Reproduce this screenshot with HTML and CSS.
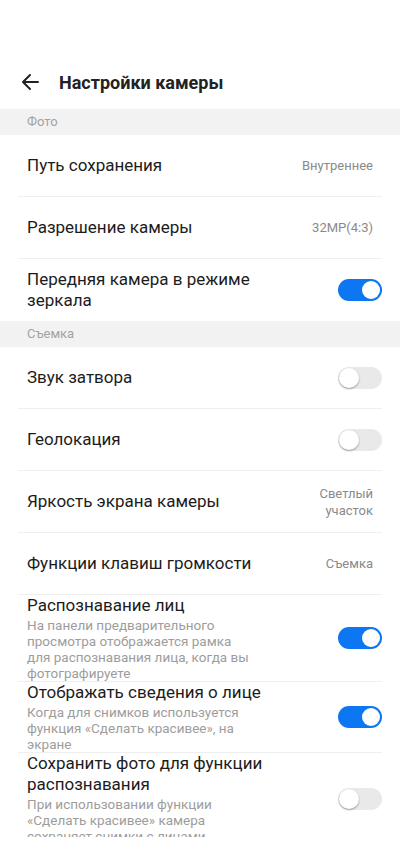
FILE: index.html
```html
<!DOCTYPE html>
<html lang="ru">
<head>
    <meta charset="UTF-8">
    <meta name="viewport" content="width=device-width, initial-scale=1.0">
    <title>Настройки камеры</title>
    <link rel="stylesheet" href="styles.css">
</head>
<body>
    <header class="top-bar">
        <button class="back" aria-label="Назад">
            <svg width="20" height="20" viewBox="0 0 20 20">
                <path d="M18 10H3.5M10 3L3 10l7 7" fill="none" stroke="#222" stroke-width="2" stroke-linecap="round" stroke-linejoin="round"/>
            </svg>
        </button>
        <h1>Настройки камеры</h1>
    </header>

    <main class="settings">
        <div class="group-label">Фото</div>
        <div class="row">
            <div class="text"><div class="name">Путь сохранения</div></div>
            <div class="value">Внутреннее</div>
        </div>
        <div class="row">
            <div class="text"><div class="name">Разрешение камеры</div></div>
            <div class="value">32MP(4:3)</div>
        </div>
        <div class="row last">
            <div class="text"><div class="name">Передняя камера в режиме зеркала</div></div>
            <span class="switch on"></span>
        </div>

        <div class="group-label">Съемка</div>
        <div class="row">
            <div class="text"><div class="name">Звук затвора</div></div>
            <span class="switch"></span>
        </div>
        <div class="row">
            <div class="text"><div class="name">Геолокация</div></div>
            <span class="switch"></span>
        </div>
        <div class="row">
            <div class="text"><div class="name">Яркость экрана камеры</div></div>
            <div class="value">Светлый<br>участок</div>
        </div>
        <div class="row">
            <div class="text"><div class="name">Функции клавиш громкости</div></div>
            <div class="value">Съемка</div>
        </div>
        <div class="row tall">
            <div class="text">
                <div class="name">Распознавание лиц</div>
                <div class="desc">На панели предварительного просмотра отображается рамка для распознавания лица, когда вы фотографируете</div>
            </div>
            <span class="switch on"></span>
        </div>
        <div class="row tall">
            <div class="text">
                <div class="name">Отображать сведения о лице</div>
                <div class="desc">Когда для снимков используется функция «Сделать красивее», на экране</div>
            </div>
            <span class="switch on"></span>
        </div>
        <div class="row tall">
            <div class="text">
                <div class="name">Сохранить фото для функции распознавания</div>
                <div class="desc">При использовании функции «Сделать красивее» камера сохраняет снимки с лицами</div>
            </div>
            <span class="switch"></span>
        </div>
    </main>
</body>
</html>
```

FILE: styles.css
```css
body {
  margin: 0;
  width: 400px;
  background: #fff;
  font-family: Roboto, "Noto Sans", Arial, sans-serif;
  color: #1c1c1c;
}
.top-bar {
  display: flex;
  align-items: center;
  height: 56px;
  padding-top: 54px;
  margin-bottom: -1px;
}
.back {
  background: none;
  border: 0;
  padding: 0;
  margin-left: 20px;
  width: 20px;
  height: 20px;
  display: flex;
}
.top-bar h1 {
  margin: 0 0 0 19px;
  font-size: 18px;
  font-weight: bold;
  color: #222;
}
.settings {
  height: 728px;
  overflow: hidden;
}
.group-label {
  height: 26px;
  line-height: 26px;
  background: #f2f2f2;
  color: #a3a3a3;
  font-size: 13px;
  padding-left: 27px;
}
.row {
  display: flex;
  align-items: center;
  justify-content: space-between;
  min-height: 61px;
  margin: 0 18px;
  padding-left: 9px;
  border-bottom: 1px solid #efefef;
}
.row.last {
  border-bottom: 0;
  min-height: 62px;
}
.row.tall {
  min-height: 0;
}
.text {
  width: 238px;
}
.name {
  font-size: 17px;
  line-height: 21px;
}
.desc {
  width: 224px;
  margin-top: 1px;
  font-size: 13.5px;
  line-height: 16px;
  color: #9d9d9d;
}
.value {
  margin-right: 9px;
  font-size: 13px;
  line-height: 17px;
  color: #8a8a8a;
  text-align: right;
}
.switch {
  position: relative;
  width: 44px;
  height: 22px;
  border-radius: 11px;
  background: #e9e9e9;
  flex-shrink: 0;
}
.switch::after {
  content: "";
  position: absolute;
  left: 1px;
  top: 1px;
  width: 20px;
  height: 20px;
  border-radius: 50%;
  background: #fff;
  box-shadow: 0 1px 2px rgba(0, 0, 0, 0.35);
}
.switch.on {
  background: #0d76f2;
}
.switch.on::after {
  left: 24px;
  top: 2px;
  width: 18px;
  height: 18px;
  box-shadow: none;
}
```
